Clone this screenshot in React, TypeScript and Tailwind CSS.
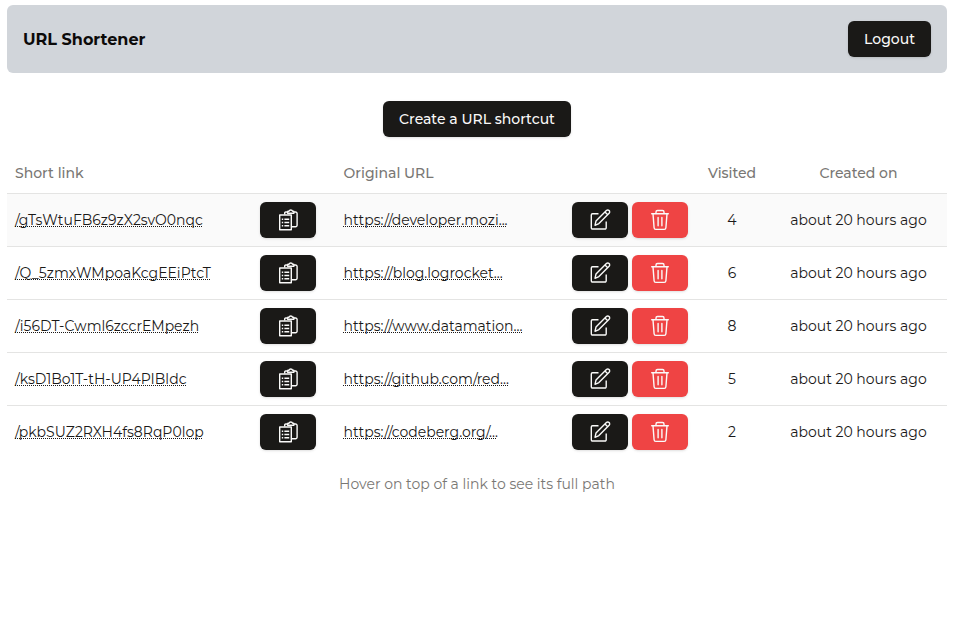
const rows = [
  { short: "/gTsWtuFB6z9zX2svO0nqc", url: "https://developer.mozi...", visited: 4 },
  { short: "/Q_5zmxWMpoaKcgEEiPtcT", url: "https://blog.logrocket...", visited: 6 },
  { short: "/i56DT-Cwml6zccrEMpezh", url: "https://www.datamation...", visited: 8 },
  { short: "/ksD1Bo1T-tH-UP4PIBldc", url: "https://github.com/red...", visited: 5 },
  { short: "/pkbSUZ2RXH4fs8RqP0lop", url: "https://codeberg.org/...", visited: 2 },
];

const grid = "grid grid-cols-[328.600px_360.400px_73px_178px] items-center border-b";
const button = "flex h-9 w-14 items-center justify-center rounded-md text-stone-50 shadow-sm";
const link = "underline decoration-dotted decoration-1 [text-decoration-skip-ink:none]";

function ClipboardIcon() {
  return (
    <svg width="24" height="24" viewBox="0 0 24 24" fill="none" stroke="currentColor" strokeWidth="1.4" strokeLinejoin="round">
      <path d="M3.700 7H15.300V21.800H3.700z" />
      <path d="M8.700 6.500V5a1 1 0 0 1 1-1h1.800M18 4h1.600a1.500 1.500 0 0 1 1.500 1.500v11.800a1.500 1.500 0 0 1-1.500 1.500H15.500" />
      <path d="M11.600 5.200v-1.200q0-.7.700-.7h.700q.4-1.300 1.800-1.300t1.800 1.300h.6q.7 0 .7.700v1.200z" />
      <path d="M5.800 11.300h1.400M8.400 11.300h4.800M5.800 14.500h1.400M8.400 14.500h4.800M5.800 17.700h1.400M8.400 17.700h4.800" />
    </svg>
  );
}

function EditIcon() {
  return (
    <svg width="24" height="24" viewBox="0 0 24 24" fill="none" stroke="currentColor" strokeWidth="1.4" strokeLinejoin="round">
      <path d="M10.500 5.700H4.500a1.200 1.200 0 0 0-1.200 1.200v12.900a1.200 1.200 0 0 0 1.200 1.200H17a1.200 1.200 0 0 0 1.200-1.200V13.500" />
      <path d="M7 17.300l1-4.300L18.400 2.600a1.900 1.900 0 0 1 2.700 2.700L10.900 15.600zM17 4.100l2.700 2.700" />
    </svg>
  );
}

function TrashIcon() {
  return (
    <svg width="24" height="24" viewBox="0 0 24 24" fill="none" stroke="currentColor" strokeWidth="1.4" strokeLinejoin="round" strokeLinecap="round">
      <path d="M3.700 5.700h16.600M8 5.500V4a1.500 1.500 0 0 1 1.500-1.500h5A1.500 1.500 0 0 1 16 4v1.500M5 5.900l1.100 13.900a1.700 1.700 0 0 0 1.700 1.600h8.400a1.700 1.700 0 0 0 1.700-1.600L19 5.900M10.100 9.500v8.300M13.900 9.500v8.300" />
    </svg>
  );
}

export default function App() {
  return (
    <div className="min-h-screen bg-white px-[7px] pt-[5px] pr-[9px] font-['Montserrat','Inter',sans-serif] text-sm text-[#1a1918]">
      <header className="flex h-[68px] items-center justify-between rounded-md bg-[#d1d5da] px-4">
        <h1 className="pt-px text-base font-bold text-[#0c0a09]">URL Shortener</h1>
        <button className="h-9 w-[83px] rounded-md bg-[#1a1917] font-medium text-stone-50 shadow-sm">Logout</button>
      </header>
      <main>
        <div className="flex justify-center pt-7">
          <button className="h-9 w-[188px] rounded-md bg-[#1a1917] font-medium text-stone-50 shadow-sm">Create a URL shortcut</button>
        </div>
        <div className="mt-4">
          <div className={`${grid} h-[41px] border-[#e4e4e3] font-medium text-[#797774]`}>
            <span className="pl-2">Short link</span>
            <span className="pl-2">Original URL</span>
            <span className="pr-px text-center">Visited</span>
            <span className="pl-px text-center">Created on</span>
          </div>
          {rows.map((row, i) => (
            <div key={row.short} className={`${grid} h-[53px] ${i === 0 ? "bg-[#fafafa]" : ""} ${i === 4 ? "border-transparent" : "border-[#e4e4e3]"}`}>
              <div className="flex items-center justify-between pr-[19.600px] pl-2">
                <span className={link}>{row.short}</span>
                <button className={`${button} bg-[#1a1917]`}><ClipboardIcon /></button>
              </div>
              <div className="flex items-center gap-1 pr-2 pl-2">
                <span className={`${link} mr-auto`}>{row.url}</span>
                <button className={`${button} bg-[#1a1917]`}><EditIcon /></button>
                <button className={`${button} bg-[#ef4444]`}><TrashIcon /></button>
              </div>
              <span className="pr-px text-center">{row.visited}</span>
              <span className="pl-px text-center">about 20 hours ago</span>
            </div>
          ))}
        </div>
        <p className="mt-[15px] text-center text-[#797774]">Hover on top of a link to see its full path</p>
      </main>
    </div>
  );
}
